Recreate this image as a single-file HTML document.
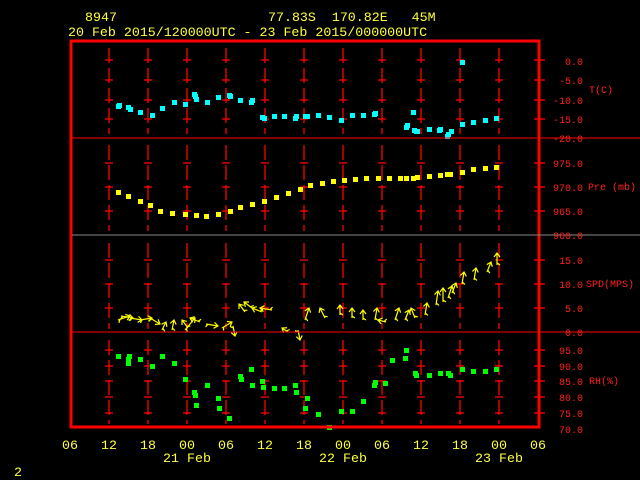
<!DOCTYPE html>
<html><head><meta charset="utf-8"><style>
html,body{margin:0;padding:0;background:#000;width:640px;height:480px;overflow:hidden}
svg{display:block}
.h{font-family:"Liberation Mono",monospace;font-size:13.3px;fill:#ffff40}
.r{font-family:"Liberation Mono",monospace;font-size:10px;fill:#ff2020}
</style></head><body>
<svg id="s" width="640" height="480" xmlns="http://www.w3.org/2000/svg">
<text class="h" x="85" y="21">8947</text>
<text class="h" x="268" y="21" xml:space="preserve">77.83S  170.82E   45M</text>
<text class="h" x="68" y="36">20 Feb 2015/120000UTC - 23 Feb 2015/000000UTC</text>
<g id="grid"></g>
<g id="data"></g>
<rect x="71" y="41" width="468" height="386" fill="none" stroke="#ff0000" stroke-width="3"/>
<line x1="72" y1="138" x2="540" y2="138" stroke="#ff0000" stroke-width="1"/>
<line x1="72" y1="235" x2="640" y2="235" stroke="#888" stroke-width="1"/>
<line x1="72" y1="332" x2="540" y2="332" stroke="#ff0000" stroke-width="1"/>
<line x1="540" y1="138" x2="640" y2="138" stroke="#ff0000" stroke-width="1"/>
<line x1="540" y1="332" x2="640" y2="332" stroke="#ff0000" stroke-width="1"/>
<g class="r" text-anchor="end">
<text x="583" y="65">0.0</text><text x="583" y="84">-5.0</text><text x="583" y="104">-10.0</text><text x="583" y="123">-15.0</text><text x="583" y="142">-20.0</text>
<text x="583" y="167">975.0</text><text x="583" y="191">970.0</text><text x="583" y="215">965.0</text><text x="583" y="239">960.0</text>
<text x="583" y="264">15.0</text><text x="583" y="288">10.0</text><text x="583" y="312">5.0</text><text x="583" y="336">0.0</text>
<text x="583" y="354">95.0</text><text x="583" y="370">90.0</text><text x="583" y="385">85.0</text><text x="583" y="401">80.0</text><text x="583" y="417">75.0</text><text x="583" y="433">70.0</text>
</g>
<g class="r"><text x="589" y="93">T(C)</text><text x="588" y="190">Pre (mb)</text><text x="586" y="287">SPD(MPS)</text><text x="589" y="384">RH(%)</text></g>
<g class="h" text-anchor="middle">
<text x="70" y="449">06</text><text x="109" y="449">12</text><text x="148" y="449">18</text><text x="187" y="449">00</text><text x="226" y="449">06</text><text x="265" y="449">12</text><text x="304" y="449">18</text><text x="343" y="449">00</text><text x="382" y="449">06</text><text x="421" y="449">12</text><text x="460" y="449">18</text><text x="499" y="449">00</text><text x="538" y="449">06</text>
<text x="187" y="462">21 Feb</text><text x="343" y="462">22 Feb</text><text x="499" y="462">23 Feb</text>
</g>
<text class="h" x="14" y="476">2</text>
</svg>
<script>
var NS="http://www.w3.org/2000/svg",g=document.getElementById('grid'),d=document.getElementById('data');
function el(p,t,a){var e=document.createElementNS(NS,t);for(var k in a)e.setAttribute(k,a[k]);p.appendChild(e);return e;}
var xs=[109,148,187,226,265,304,343,382,421,460,499];
var panels=[[48,134,[60,80,100,119]],[145,231,[163,187,211]],[243,329,[260,284,308]],[340,424,[350,366,381,397,413]]];
xs.forEach(function(x){panels.forEach(function(p){
 el(g,'line',{x1:x,y1:p[0],x2:x,y2:p[1],stroke:'#ff0000','stroke-width':1.3,'stroke-dasharray':'15,5'});
 p[2].forEach(function(y){el(g,'line',{x1:x-4,y1:y,x2:x+4,y2:y,stroke:'#ff0000','stroke-width':1.3});});
});});
[60,80,100,119,163,187,211,260,284,308,350,366,381,397,413].forEach(function(y){el(g,'line',{x1:534,y1:y,x2:545,y2:y,stroke:'#ff0000','stroke-width':1.3});});
function pts(a,c){a.forEach(function(p){el(d,'rect',{x:p[0]-2,y:p[1]-2,width:5,height:5,fill:c});});}
pts([[118,106],[119,105],[128,107],[130,109],[140,112],[152,115],[162,108],[174,102],[185,104],[194,94],[195,96],[196,99],[207,102],[218,97],[229,95],[230,96],[240,100],[251,102],[252,100],[262,117],[264,118],[274,116],[284,116],[295,118],[296,116],[305,116],[307,116],[318,115],[329,117],[341,120],[352,115],[363,115],[374,114],[375,113],[406,127],[407,125],[413,112],[414,130],[416,131],[417,131],[429,129],[439,130],[440,129],[447,136],[448,134],[451,131],[462,62],[462,124],[473,122],[485,120],[496,118]],'#00ffff');
pts([[118,192],[128,196],[140,201],[150,205],[160,211],[172,213],[185,214],[196,215],[206,216],[218,214],[230,211],[240,207],[252,204],[264,201],[276,197],[288,193],[300,189],[310,185],[322,183],[333,181],[344,180],[355,179],[366,178],[378,178],[389,178],[400,178],[406,178],[413,178],[417,177],[429,176],[440,175],[447,174],[450,174],[462,172],[473,169],[485,168],[496,167]],'#ffff00');
pts([[118,356],[129,356],[128,359],[128,363],[140,359],[152,366],[162,356],[174,363],[185,379],[194,392],[195,395],[196,405],[207,385],[218,398],[219,408],[229,418],[240,376],[241,379],[251,369],[252,385],[262,381],[263,387],[274,388],[284,388],[295,385],[296,392],[307,398],[305,408],[318,414],[329,427],[341,411],[352,411],[363,401],[374,385],[375,382],[385,383],[392,360],[405,358],[406,350],[415,373],[416,375],[429,375],[440,373],[448,373],[450,375],[462,369],[473,371],[485,371],[496,369]],'#00ff00');
var w=[[118,320,12,-4],[121,316,12,2],[130,318,12,2],[140,320,12,-2],[150,318,10,6],[162,330,4,-8],[172,330,2,-10],[185,330,10,-12],[188,328,-6,-8],[200,322,-10,-4],[206,324,12,2],[222,328,10,-6],[233,326,2,10],[245,312,-6,-8],[252,308,-8,-6],[262,312,-10,-4],[272,310,-12,-2],[288,332,-6,-4],[298,330,2,10],[305,320,4,-12],[325,318,-5,-10],[340,315,0,-10],[352,318,0,-10],[363,320,0,-10],[375,320,2,-12],[386,322,-8,-2],[395,320,4,-12],[405,320,4,-10],[415,318,-4,-10],[425,315,2,-12],[436,305,2,-14],[443,302,0,-14],[448,298,4,-12],[452,293,4,-10],[462,284,2,-12],[474,280,2,-12],[487,272,4,-10],[497,265,0,-12]];
w.forEach(function(a){var x=a[0],y=a[1],tx=x+a[2],ty=y+a[3],L=Math.hypot(a[2],a[3]),ux=a[2]/L,uy=a[3]/L;
 var p='M'+x+' '+y+'L'+tx+' '+ty+'M'+(tx-4*ux-3*uy)+' '+(ty-4*uy+3*ux)+'L'+tx+' '+ty+'L'+(tx-4*ux+3*uy)+' '+(ty-4*uy-3*ux)+'M'+(x+ux*2)+' '+(y+uy*2)+'l'+(-3*uy-2*ux)+' '+(3*ux-2*uy);
 el(d,'path',{d:p,stroke:'#ffff00','stroke-width':1.2,fill:'none'});});
</script>
</body></html>
